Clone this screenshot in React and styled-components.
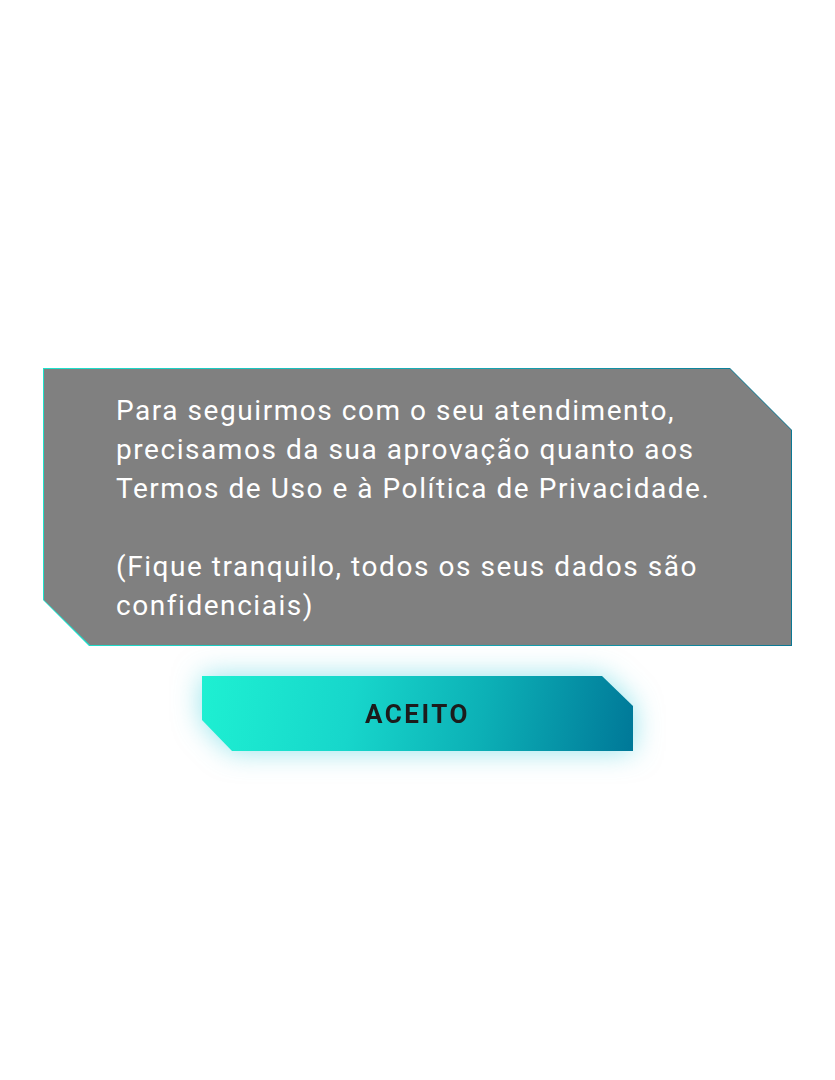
import styled, { createGlobalStyle } from 'styled-components';

const GlobalStyle = createGlobalStyle`
  html, body {
    margin: 0;
    padding: 0;
    background: #ffffff;
  }
`;

const Page = styled.div`
  width: 835px;
  height: 1080px;
  box-sizing: border-box;
  padding: 368px 0 0 43px;
  font-family: Roboto, 'Liberation Sans', sans-serif;
`;

const Stack = styled.div`
  width: 749px;
  display: flex;
  flex-direction: column;
  align-items: center;
  gap: 30px;
`;

// outer layer paints the gradient edge, inner layer the grey fill
const PanelFrame = styled.div`
  width: 749px;
  height: 278px;
  padding: 1px;
  box-sizing: border-box;
  background: linear-gradient(90deg, #1fe3cc 0%, #17a9b4 55%, #0b7894 100%);
  clip-path: polygon(0 0, 687px 0, 100% 62px, 100% 100%, 46px 100%, 0 232px);
`;

const Panel = styled.div`
  width: 100%;
  height: 100%;
  box-sizing: border-box;
  background: #808080;
  clip-path: polygon(0 0, 686px 0, 100% 61px, 100% 100%, 46px 100%, 0 231px);
  padding: 22px 50px 0 72px;
  color: #ffffff;
  font-size: 28px;
  line-height: 39px;
  letter-spacing: 1.55px;
`;

const Paragraph = styled.p`
  margin: 0 0 ${p => p.gap || 0}px;
`;

const Glow = styled.div`
  filter: drop-shadow(0 0 14px rgba(40, 200, 215, 0.5));
`;

const Button = styled.button`
  width: 431px;
  height: 75px;
  border: none;
  padding: 0;
  cursor: pointer;
  background: linear-gradient(100deg, #1ef0d2 0%, #17d6cb 35%, #0cb0b6 65%, #007898 100%);
  clip-path: polygon(0 0, 400px 0, 100% 30px, 100% 100%, 30px 100%, 0 44px);
  color: #1c1c1c;
  font-family: Roboto, 'Liberation Sans', sans-serif;
  font-size: 26px;
  font-weight: 700;
  letter-spacing: 2.5px;
  display: flex;
  align-items: center;
  justify-content: center;
`;

export default function App() {
  return (
    <Page>
      <GlobalStyle />
      <Stack>
        <PanelFrame>
          <Panel>
            <Paragraph gap={39}>
              Para seguirmos com o seu atendimento, precisamos da sua aprovação quanto aos Termos de Uso e à Política de Privacidade.
            </Paragraph>
            <Paragraph>
              (Fique tranquilo, todos os seus dados são confidenciais)
            </Paragraph>
          </Panel>
        </PanelFrame>
        <Glow>
          <Button>ACEITO</Button>
        </Glow>
      </Stack>
    </Page>
  );
}
